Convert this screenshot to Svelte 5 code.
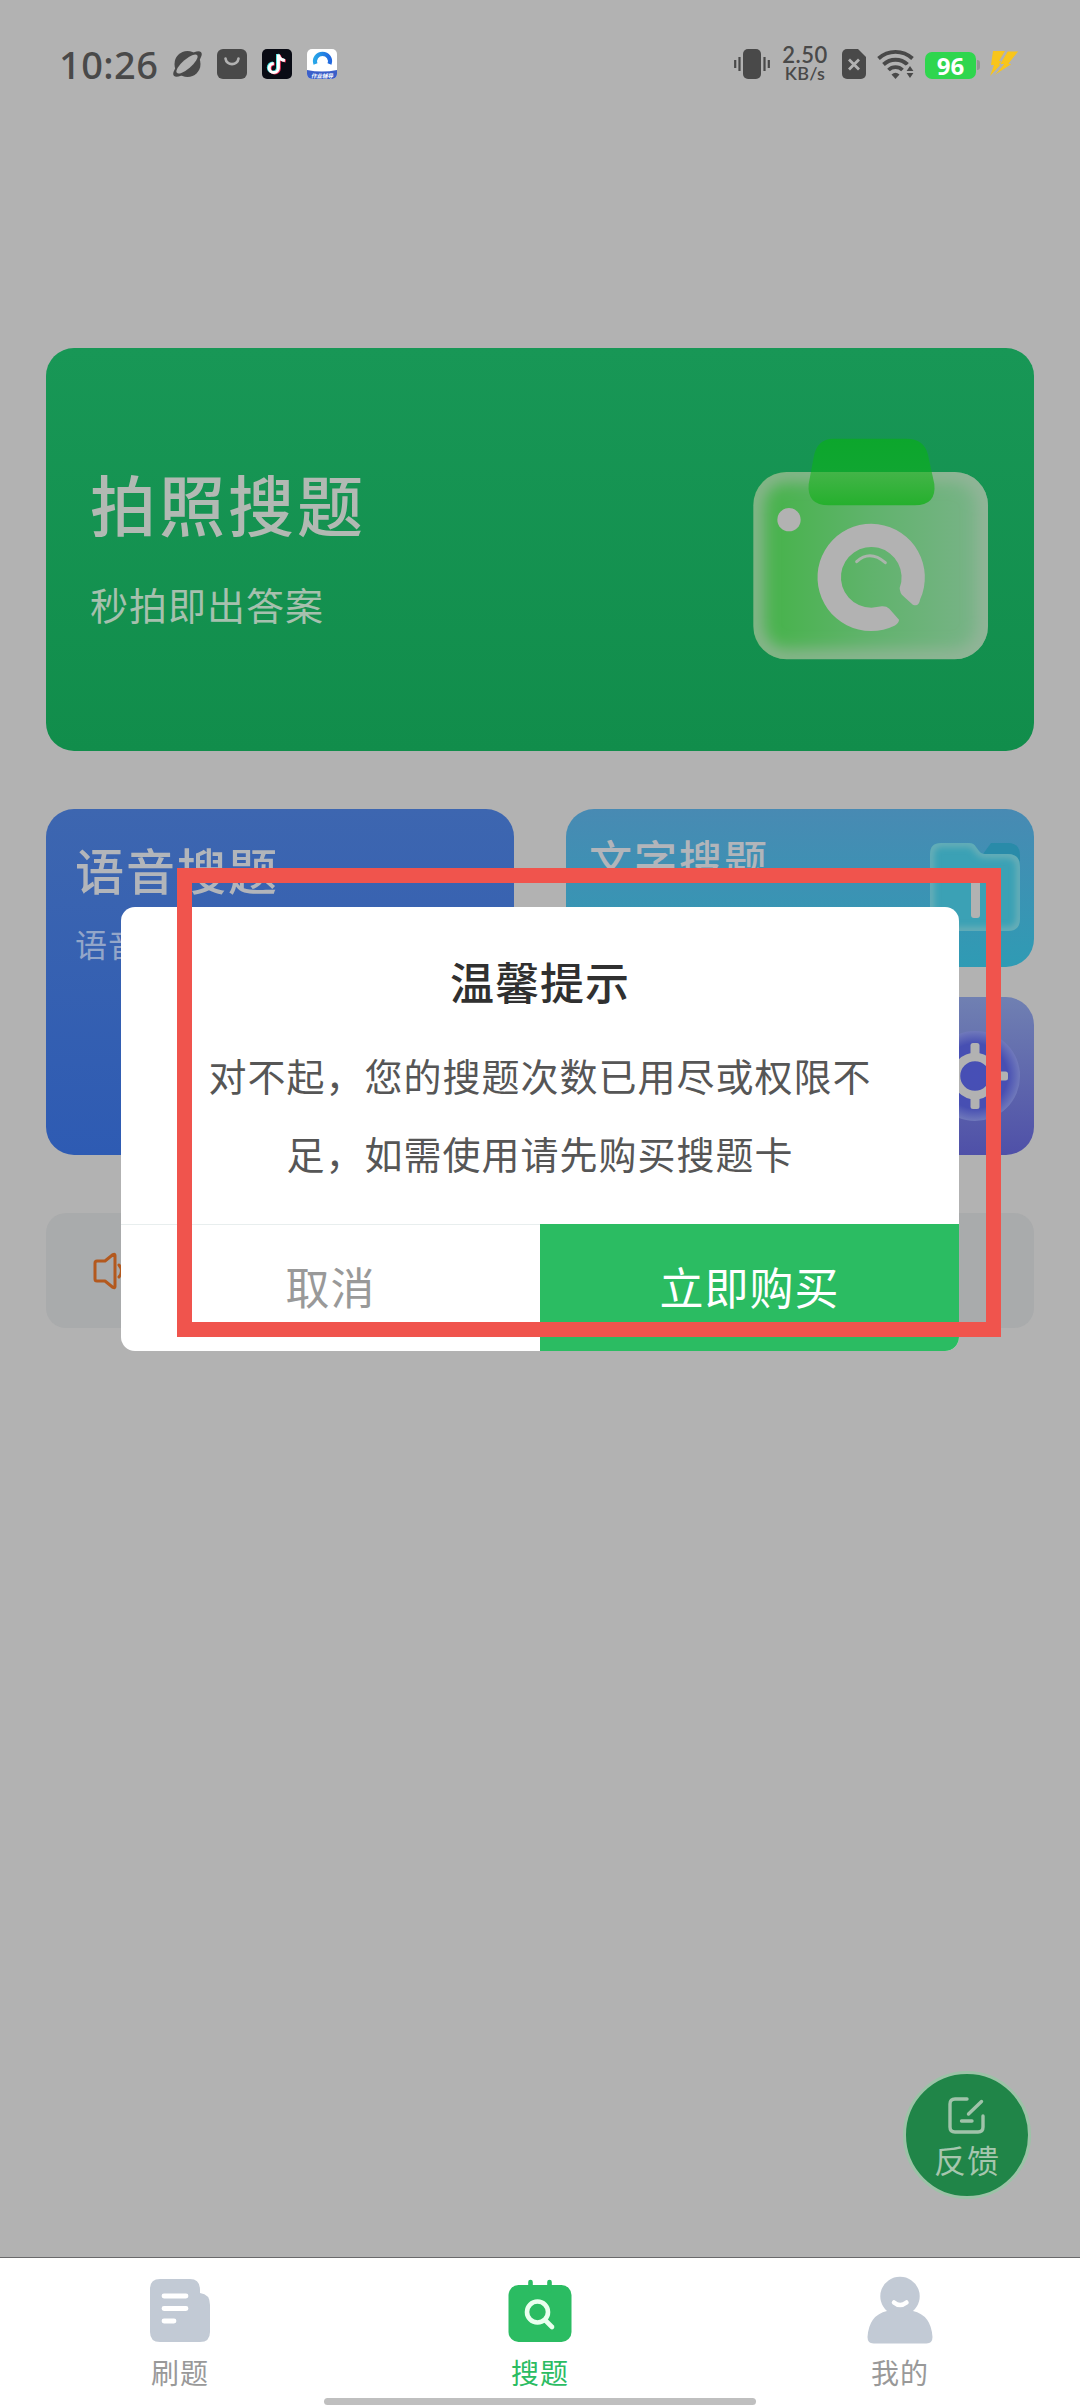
<script lang="ts">
    let open = true;
    let active = "search";

    const tabs = [
        {id: "practice", label: "刷题"},
        {id: "search", label: "搜题"},
        {id: "mine", label: "我的"},
    ];

    const close = () => {
        open = false;
    };
</script>

<div class="screen">
    <header class="status-bar">
        <div class="status-left">
            <span class="time">10:26</span>
            <svg class="planet" width="31" height="30" viewBox="0 0 31 30">
                <circle cx="15.500" cy="15" r="13" fill="#494949" />
                <ellipse cx="15.500" cy="15" rx="18" ry="6.500" transform="rotate(-41 15.500 15)" fill="#494949" />
                <ellipse cx="15" cy="15" rx="13.500" ry="4.500" transform="rotate(-41 15 15)" fill="#b2b2b2" />
            </svg>
            <svg width="30" height="30" viewBox="0 0 30 30">
                <rect width="30" height="30" rx="6" fill="#494949" />
                <path d="M8.500 9.500c1 7.500 12 7.500 13 0" fill="none" stroke="#b2b2b2" stroke-width="2.600" stroke-linecap="round" />
            </svg>
            <svg width="30" height="30" viewBox="0 0 30 30">
                <rect width="30" height="30" rx="5" fill="#090b14" />
                <g fill="none" stroke-width="3">
                    <path d="M15.500 5v13.500a4.600 4.600 0 1 1-4.600-4.600M15.500 5c.5 4 3 5.500 6.500 6" stroke="#45e3e0" />
                    <path d="M17.300 6v13.500a4.600 4.600 0 1 1-4.600-4.600M17.300 6c.5 4 3 5.500 6.500 6" stroke="#f0325a" />
                    <path d="M16.400 5.500v13.500a4.600 4.600 0 1 1-4.600-4.600M16.400 5.500c.5 4 3 5.500 6.500 6" stroke="#fff" />
                </g>
            </svg>
            <svg width="30" height="30" viewBox="0 0 30 30">
                <defs>
                    <clipPath id="app-clip"><rect width="30" height="30" rx="5" /></clipPath>
                    <linearGradient id="app-arc" x1="0" x2="1">
                        <stop offset="0" stop-color="#27a5e8" />
                        <stop offset="1" stop-color="#2168df" />
                    </linearGradient>
                </defs>
                <g clip-path="url(#app-clip)">
                    <rect width="30" height="30" fill="#fff" />
                    <path d="M8.500 15a7.500 7.500 0 1 1 14 0" fill="none" stroke="url(#app-arc)" stroke-width="4.200" />
                    <path d="M0 21q15 3 30 0v9H0z" fill="#3b5fc9" />
                    <text x="15" y="29" text-anchor="middle" class="app-label">作业辅导</text>
                </g>
            </svg>
        </div>
        <div class="status-right">
            <svg width="36" height="30" viewBox="0 0 36 30">
                <rect x="9" width="18" height="30" rx="5" fill="#494949" />
                <path d="M1.200 11v8M5.500 8v14M30.500 8v14M34.800 11v8" stroke="#494949" stroke-width="2.200" />
            </svg>
            <div class="speed">
                <span class="rate">2.50</span>
                <span class="unit">KB/s</span>
            </div>
            <svg class="sim" width="24" height="30" viewBox="0 0 24 30">
                <path d="M5 0h11l8 8v17a5 5 0 0 1-5 5H5a5 5 0 0 1-5-5V5a5 5 0 0 1 5-5z" fill="#494949" />
                <path d="M7 10.500l10 10M17 10.500l-10 10" stroke="#b2b2b2" stroke-width="2.800" />
            </svg>
            <svg class="wifi" width="38" height="30" viewBox="0 0 38 30">
                <g fill="none" stroke="#494949" stroke-width="3.800">
                    <path d="M1.500 9.500a25 25 0 0 1 34 0" />
                    <path d="M6.500 15.500a17.500 17.500 0 0 1 24 0" />
                    <path d="M11.500 21a10 10 0 0 1 14 0" />
                </g>
                <path d="M18.500 30l-4-4.500q4-3.500 8 0z" fill="#494949" />
                <path d="M28.500 16.500L34 14.500h4V30h-9z" fill="#b2b2b2" />
                <path d="M33 17l3.400 5h-6.800zM33 29l3.400-5h-6.800z" fill="#494949" />
            </svg>
            <div class="battery">96</div>
            <svg class="bolt" width="30" height="26" viewBox="0 0 30 26">
                <path d="M4 0h12l-6 10h5L1 25l4-11H2z" fill="#f8c51c" />
                <path d="M18.500 0H30L20 12.500h4L4 25.500l10.500-12h-4z" fill="#f8c51c" stroke="#b2b2b2" />
            </svg>
        </div>
    </header>

    <main class="content">
        <section class="hero">
            <div class="hero-text">
                <h1>拍照搜题</h1>
                <p>秒拍即出答案</p>
            </div>
            <svg class="camera" width="237" height="224" viewBox="100 80 711 672">
                <defs>
                    <linearGradient id="cam-body" x1="0" x2="1">
                        <stop offset=".12" stop-color="#4ab34f" />
                        <stop offset=".5" stop-color="#60b36c" />
                        <stop offset="1" stop-color="#7bb38a" />
                    </linearGradient>
                    <linearGradient id="cam-lid" x1="0" x2="0" y1="0" y2="1">
                        <stop offset="0" stop-color="#0ca62c" />
                        <stop offset=".5" stop-color="#10a631" />
                        <stop offset=".5" stop-color="#43b448" />
                        <stop offset="1" stop-color="#25b02d" />
                    </linearGradient>
                    <filter id="cam-blur" x="-20%" y="-20%" width="140%" height="140%">
                        <feGaussianBlur stdDeviation="26" />
                    </filter>
                    <clipPath id="cam-clip"><rect x="104" y="185" width="704" height="562" rx="100" /></clipPath>
                </defs>
                <g clip-path="url(#cam-clip)">
                    <rect x="104" y="185" width="704" height="562" fill="url(#cam-body)" />
                    <rect x="104" y="185" width="704" height="562" rx="100" fill="none" stroke="#98b59c" stroke-width="50" filter="url(#cam-blur)" />
                </g>
                <path d="M344 85h220q52 0 64 48l19 88q7 64-59 64H330q-66 0-60-64l15-80q9-56 59-56z" fill="url(#cam-lid)" />
                <circle cx="211" cy="328" r="35" fill="#b2b2b2" />
                <path d="M541 628q1 8-12 17.500A161 161 0 1 1 604.500 567q-4 24-22 16l-29-26q-10-9-10.500-24A91 91 0 1 0 458 592q17-1 31-4 14-1 23 7z" fill="#b2b2b2" />
                <path d="M414 454q40-37 86 3" fill="none" stroke="#aab5ab" stroke-width="9" stroke-linecap="round" />
            </svg>
        </section>

        <section class="grid">
            <div class="card voice">
                <h2>语音搜题</h2>
                <p>语音搜索答案</p>
            </div>
            <div class="column">
                <div class="card text-card">
                    <h3>文字搜题</h3>
                    <svg class="folder" width="92" height="90" viewBox="0 0 92 90">
                        <defs>
                            <filter id="fold-blur" x="-10%" y="-10%" width="120%" height="120%">
                                <feGaussianBlur stdDeviation="3.500" />
                            </filter>
                            <clipPath id="fold-clip">
                                <path d="M12 1h28q5 0 7 4l3 4q2 3 6 3h23q12 0 12 13v52q0 12-12 12H12Q1 89 1 77V12Q1 1 12 1z" />
                            </clipPath>
                        </defs>
                        <path d="M62 1h17q12 0 12 13v9H46z" fill="#298ba9" />
                        <g clip-path="url(#fold-clip)">
                            <path d="M0 0h92v90H0z" fill="#3ba1b5" />
                            <path d="M12 1h28q5 0 7 4l3 4q2 3 6 3h23q12 0 12 13v52q0 12-12 12H12Q1 89 1 77V12Q1 1 12 1z" fill="none" stroke="#78b2b8" stroke-width="6" filter="url(#fold-blur)" />
                        </g>
                        <path d="M30 33h34" stroke="#b2b2b2" stroke-width="9" stroke-linecap="round" />
                        <rect x="42" y="30" width="9" height="46" rx="3" fill="#b2b2b2" />
                    </svg>
                </div>
                <div class="card tool-card">
                    <svg class="gear" width="90" height="90" viewBox="0 0 90 90">
                        <defs>
                            <radialGradient id="gear-bg">
                                <stop offset="0" stop-color="#474fb6" />
                                <stop offset=".72" stop-color="#474fb2" />
                                <stop offset="1" stop-color="#7079bb" />
                            </radialGradient>
                        </defs>
                        <circle cx="45" cy="45" r="45" fill="url(#gear-bg)" />
                        <circle cx="45" cy="45" r="19" fill="none" stroke="#b2b2b2" stroke-width="8.500" />
                        <g fill="#b2b2b2">
                            <rect x="40.500" y="12" width="9" height="14" rx="2.500" />
                            <rect x="40.500" y="64" width="9" height="14" rx="2.500" />
                            <rect x="12" y="40.500" width="14" height="9" rx="2.500" />
                            <rect x="64" y="40.500" width="14" height="9" rx="2.500" />
                        </g>
                    </svg>
                </div>
            </div>
        </section>

        <section class="notice">
            <svg width="40" height="38" viewBox="0 0 40 38">
                <path d="M2 11q0-2 2-2h8l8-6.500q2-1 2 1v31q0 2-2 1L12 29H4q-2 0-2-2z" fill="none" stroke="#b3591e" stroke-width="3" stroke-linejoin="round" />
                <path d="M26 13q5 6 0 12M31 8q9 11 0 22" fill="none" stroke="#b3591e" stroke-width="3" stroke-linecap="round" />
            </svg>
        </section>
    </main>

    <button class="feedback">
        <svg width="38" height="38" viewBox="0 0 38 38">
            <path d="M19 2H7Q2 2 2 7v23q0 5 5 5h23q5 0 5-5V19M20.500 17L33.500 4.500M13.500 24H24" fill="none" stroke="#a0c3aa" stroke-width="3.400" stroke-linecap="round" />
        </svg>
        <span>反馈</span>
    </button>

    <nav class="tab-bar">
        {#each tabs as tab}
            <button class="tab" class:active={active === tab.id} on:click={() => (active = tab.id)}>
                {#if tab.id === "practice"}
                    <svg width="72" height="70" viewBox="0 0 72 70">
                        <path d="M16 3h30q10 0 10 11v3q10 1 10 12v27q0 10-10 10H16Q6 66 6 56V13Q6 3 16 3z" fill="#c2cad5" />
                        <path d="M20 20h22M20 32.500h22M20 45h10" stroke="#fff" stroke-width="4.800" stroke-linecap="round" />
                    </svg>
                {:else if tab.id === "search"}
                    <svg width="72" height="70" viewBox="0 0 72 70">
                        <rect x="4.500" y="9" width="63" height="57" rx="10" fill="#2bbc62" />
                        <path d="M26.500 6v8M45.500 6v8" stroke="#2bbc62" stroke-width="4.600" stroke-linecap="round" />
                        <circle cx="33.500" cy="36" r="10.500" fill="none" stroke="#eaffef" stroke-width="4.600" />
                        <path d="M41 44l7 7" stroke="#eaffef" stroke-width="4.600" stroke-linecap="round" />
                    </svg>
                {:else}
                    <svg width="72" height="70" viewBox="0 0 72 70">
                        <path d="M36 .8a19.500 19.500 0 0 1 13 34.200Q67 39 68.500 61q0 6.500-6 6.500h-53q-6 0-6-6.500Q5 39 23 35A19.500 19.500 0 0 1 36 .8z" fill="#c2cad5" />
                        <path d="M30 26.500q6 5 12.500 0" fill="none" stroke="#fff" stroke-width="4.500" stroke-linecap="round" />
                    </svg>
                {/if}
                <span>{tab.label}</span>
            </button>
        {/each}
        <div class="home-indicator"></div>
    </nav>

    {#if open}
        <div class="modal-backdrop">
            <div class="modal-window">
                <div class="modal-body">
                    <h4>温馨提示</h4>
                    <p>对不起，您的搜题次数已用尽或权限不足，如需使用请先购买搜题卡</p>
                </div>
                <div class="modal-footer">
                    <button class="cancel" on:click={close}>取消</button>
                    <button class="confirm" on:click={close}>立即购买</button>
                </div>
            </div>
        </div>
    {/if}

    <div class="marker"></div>
</div>

<style>
    :global(body) {
        background: #b2b2b2;
    }

    .screen {
        position: relative;
        display: flex;
        flex-direction: column;
        width: 1080px;
        height: 2408px;
        overflow: hidden;
        background: #b2b2b2;
        font-family: "Noto Sans CJK SC", sans-serif;
        letter-spacing: 1px;
    }

    h1, h2, h3, h4, p {
        margin: 0;
        font-weight: 400;
    }

    button {
        border: 0;
        padding: 0;
        background: none;
        font-family: inherit;
        letter-spacing: inherit;
        cursor: pointer;
    }

    svg {
        display: block;
        flex: none;
    }

    .status-bar {
        display: flex;
        justify-content: space-between;
        height: 128px;
        box-sizing: border-box;
        padding: 0 61px 0 59px;
        color: #494949;
        font-family: "Noto Sans", sans-serif;
    }

    .status-left,
    .status-right {
        display: flex;
        align-items: center;
    }

    .status-left {
        gap: 15px;
    }

    .time {
        width: 98px;
        margin-top: -1px;
        font-size: 38px;
        font-weight: 500;
        letter-spacing: 0.4px;
        line-height: 40px;
    }

    .planet {
        margin-right: -1px;
    }

    .app-label {
        fill: #fff;
        font-family: "Noto Sans CJK SC", sans-serif;
        font-size: 5.5px;
        font-style: italic;
        font-weight: 700;
        letter-spacing: 0;
    }

    .speed {
        display: flex;
        flex-direction: column;
        align-items: center;
        width: 48px;
        margin: 0 13px 0 11px;
        font-family: "Liberation Sans", sans-serif;
        font-weight: 600;
        letter-spacing: 0;
    }

    .rate {
        font-family: Lato, sans-serif;
        font-size: 22px;
        letter-spacing: 0.5px;
        line-height: 19px;
    }

    .unit {
        font-family: Lato, sans-serif;
        font-size: 18px;
        letter-spacing: 0.3px;
        line-height: 19px;
    }

    .wifi {
        margin: 0 10px 0 11px;
    }

    .battery {
        position: relative;
        width: 51px;
        height: 27px;
        margin: 3px 13px 0 0;
        border-radius: 7px;
        background: #2fd64e;
        color: #fff;
        font-family: "Open Sans", sans-serif;
        font-size: 24px;
        font-weight: 700;
        letter-spacing: 0;
        line-height: 27px;
        text-align: center;
    }

    .battery::after {
        content: "";
        position: absolute;
        top: 8px;
        right: -4px;
        width: 3px;
        height: 10px;
        border-radius: 0 3px 3px 0;
        background: #949494;
    }

    .content {
        display: flex;
        flex-direction: column;
        padding: 220px 46px 0;
    }

    .hero {
        display: flex;
        justify-content: space-between;
        height: 403px;
        box-sizing: border-box;
        padding: 89px 45px 0 44px;
        border-radius: 28px;
        background: linear-gradient(#189756, #118d4b);
        color: #b2b9b3;
    }

    .hero-text {
        padding-top: 17px;
    }

    .hero h1 {
        font-size: 66px;
        font-weight: 500;
        letter-spacing: 3px;
        line-height: 96px;
    }

    .hero p {
        margin-top: 26px;
        color: #a6c0ae;
        font-size: 38px;
        line-height: 56px;
    }

    .grid {
        display: grid;
        grid-template-columns: 1fr 1fr;
        gap: 52px;
        margin-top: 58px;
        height: 346px;
    }

    .card {
        border-radius: 28px;
        color: #b2b5ba;
    }

    .voice {
        padding: 24px 29px;
        background: linear-gradient(#3d66b0, #2e5bb3);
    }

    .voice h2 {
        font-size: 49px;
        font-weight: 500;
        letter-spacing: 2px;
        line-height: 72px;
    }

    .voice p {
        margin-top: 14px;
        color: #93a6c9;
        font-size: 32px;
        line-height: 48px;
    }

    .column {
        display: flex;
        flex-direction: column;
        gap: 30px;
    }

    .text-card,
    .tool-card {
        display: flex;
        justify-content: space-between;
        height: 158px;
        box-sizing: border-box;
    }

    .text-card {
        padding: 17px 13px 0 23px;
        background: linear-gradient(#488ab3, #2f9bb4);
    }

    .text-card h3 {
        font-size: 43px;
        font-weight: 500;
        letter-spacing: 2px;
        line-height: 64px;
    }

    .folder {
        margin-top: 16px;
    }

    .tool-card {
        justify-content: flex-end;
        align-items: center;
        padding-right: 14px;
        background: linear-gradient(#7080b2, #4f50a8);
    }

    .notice {
        display: flex;
        align-items: center;
        height: 115px;
        margin-top: 58px;
        padding-left: 47px;
        border-radius: 20px;
        background: #a9abac;
    }

    .feedback {
        position: absolute;
        top: 2071px;
        left: 903px;
        display: flex;
        flex-direction: column;
        align-items: center;
        width: 128px;
        height: 128px;
        box-sizing: border-box;
        padding-top: 23px;
        border: 3px solid #9cc3a7;
        border-radius: 50%;
        background: #208548;
        color: #a6c6ae;
    }

    .feedback span {
        margin-top: 2px;
        font-size: 32px;
        line-height: 44px;
    }

    .tab-bar {
        position: relative;
        display: flex;
        height: 151px;
        box-sizing: border-box;
        margin-top: auto;
        border-top: 1px solid #69696b;
        background: #fff;
    }

    .tab {
        display: flex;
        flex: 1;
        flex-direction: column;
        align-items: center;
        padding-top: 18px;
        color: #999;
        font-size: 28px;
    }

    .tab span {
        margin-top: 6px;
        line-height: 40px;
    }

    .tab.active {
        color: #2bbc62;
    }

    .home-indicator {
        position: absolute;
        bottom: 3px;
        left: 324px;
        width: 432px;
        height: 7px;
        border-radius: 4px;
        background: #bfbfbf;
    }

    .modal-backdrop {
        position: absolute;
        top: 0;
        left: 0;
        right: 0;
        bottom: 150px;
        display: flex;
        justify-content: center;
        align-items: center;
    }

    .modal-window {
        display: flex;
        flex-direction: column;
        width: 838px;
        height: 444px;
        border-radius: 14px;
        overflow: hidden;
        background: #fff;
        text-align: center;
    }

    .modal-body {
        flex: 1;
        padding: 42px 79px 0;
    }

    .modal-body h4 {
        color: #303030;
        font-size: 44px;
        font-weight: 500;
        line-height: 64px;
    }

    .modal-body p {
        margin-top: 23px;
        color: #565656;
        font-size: 38px;
        line-height: 78px;
    }

    .modal-footer {
        display: flex;
        height: 127px;
    }

    .modal-footer button {
        flex: 1;
        padding-bottom: 4px;
        font-size: 44px;
    }

    .cancel {
        border-top: 1px solid #e8eeee;
        color: #999;
    }

    .confirm {
        background: #2bbc62;
        color: #fff;
    }

    .marker {
        position: absolute;
        top: 868px;
        left: 177px;
        width: 824px;
        height: 469px;
        box-sizing: border-box;
        border: 15px solid #f0544d;
    }
</style>
